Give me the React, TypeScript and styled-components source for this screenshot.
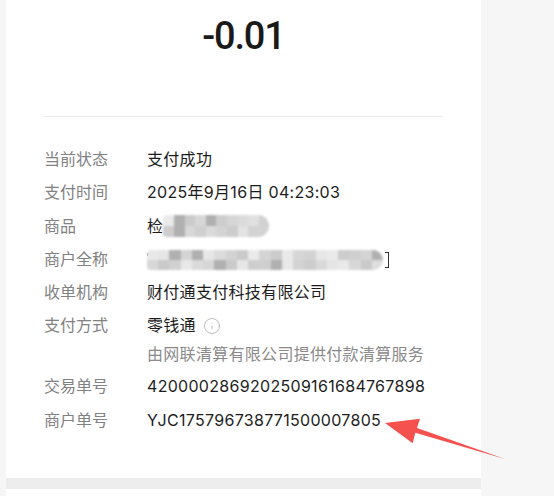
import React from 'react';
import { Info } from 'lucide-react';
import styled, { createGlobalStyle } from 'styled-components';

const GlobalStyle = createGlobalStyle`
  html, body {
    margin: 0;
    padding: 0;
    background: #f6f6f6;
  }
  body {
    font-family: Inter, "Noto Sans CJK SC", sans-serif;
    -webkit-font-smoothing: antialiased;
  }
`;

// pseudo random greys for the blurred (privacy) blocks
function shades(count: number, seed: number) {
  const out: string[] = [];
  let s = seed;
  for (let i = 0; i < count; i++) {
    s = (s * 9301 + 49297) % 233280;
    const r = s / 233280;
    const v = r > 0.9 ? 176 : Math.round(200 + r * 38);
    out.push(`rgb(${v},${v},${v})`);
  }
  return out;
}

interface MosaicProps {
  width: number;
  height: number;
  seed: number;
}

function Mosaic({ width, height, seed }: MosaicProps) {
  const cols = Math.round(width / 11);
  const tiles = shades(cols * 2, seed);
  return (
    <S.Mosaic $w={width} $h={height} $cols={cols}>
      {tiles.map((c, i) => (
        <S.Tile key={i} $c={c} />
      ))}
    </S.Mosaic>
  );
}

interface RowProps {
  label: string;
  children: React.ReactNode;
}

function Row({ label, children }: RowProps) {
  return (
    <S.Row>
      <S.Label>{label}</S.Label>
      <S.Value>{children}</S.Value>
    </S.Row>
  );
}

export default function App() {
  return (
    <>
      <GlobalStyle />
      <S.Page>
        <S.Column>
          <S.Card>
            <S.Amount>-0.01</S.Amount>
            <S.Divider />
            <S.List>
              <Row label="当前状态">支付成功</Row>
              <Row label="支付时间">2025年9月16日 04:23:03</Row>
              <Row label="商品">
                <S.Inline>
                  检<Mosaic width={106} height={22} seed={17} />
                </S.Inline>
              </Row>
              <Row label="商户全称">
                <S.Inline>
                  <S.Tick />
                  <Mosaic width={236} height={20} seed={91} />
                  <S.Bracket />
                </S.Inline>
              </Row>
              <Row label="收单机构">财付通支付科技有限公司</Row>
              <Row label="支付方式">
                <S.Inline>
                  零钱通
                  <S.InfoIcon>
                    <Info size={18} strokeWidth={1.1} color="#acacac" />
                  </S.InfoIcon>
                </S.Inline>
                <S.Sub>由网联清算有限公司提供付款清算服务</S.Sub>
              </Row>
              <Row label="交易单号">4200002869202509161684767898</Row>
              <Row label="商户单号">YJC175796738771500007805</Row>
            </S.List>
          </S.Card>
          <S.Band />
          <S.NextCard />
        </S.Column>
        <S.Arrow width="124" height="46" viewBox="0 0 124 46">
          <polygon points="2,7 37,2.7 34,12 122,43 32.3,16.7 29.7,27.3" fill="#f5514f" />
        </S.Arrow>
      </S.Page>
    </>
  );
}

const S = {
  Page: styled.div`
    position: relative;
    height: 496px;
    overflow: hidden;
    padding-left: 6px;
  `,
  Column: styled.div`
    width: 475px;
  `,
  Card: styled.div`
    background: #fff;
    padding: 11px 38px 41px;
  `,
  Amount: styled.div`
    text-align: center;
    font-family: Roboto, sans-serif;
    font-weight: 500;
    font-size: 38px;
    line-height: 51px;
    letter-spacing: -1.2px;
    color: #1a1a1a;
  `,
  Divider: styled.div`
    height: 1px;
    margin-top: 54px;
    background: #ebebeb;
  `,
  List: styled.div`
    margin-top: 26px;
  `,
  Row: styled.div`
    display: grid;
    grid-template-columns: 103px 1fr;
    font-size: 16px;
    line-height: 33.3px;
  `,
  Label: styled.div`
    color: #828282;
  `,
  Value: styled.div`
    color: #1c1c1c;
    letter-spacing: 0.3px;
  `,
  Inline: styled.div`
    display: flex;
    align-items: center;
    height: 33.3px;
  `,
  Sub: styled.div`
    color: #8a8a8a;
    line-height: 22.7px;
    padding-bottom: 5px;
  `,
  InfoIcon: styled.span`
    display: inline-flex;
    margin-left: 7px;
  `,
  Mosaic: styled.div<{ $w: number; $h: number; $cols: number }>`
    display: grid;
    grid-template-columns: repeat(${(p) => p.$cols}, 1fr);
    grid-template-rows: 1fr 1fr;
    width: ${(p) => p.$w}px;
    height: ${(p) => p.$h}px;
    border-radius: 4px ${(p) => p.$h / 2}px ${(p) => p.$h / 2}px 4px;
    overflow: hidden;
    filter: blur(0.8px);
  `,
  Tile: styled.div<{ $c: string }>`
    background: ${(p) => p.$c};
  `,
  Tick: styled.span`
    width: 1px;
    height: 3px;
    margin: -10px -1px 0 0;
    background: #666;
  `,
  Bracket: styled.span`
    width: 3px;
    height: 14px;
    margin-left: 2px;
    border: 1.5px solid #333;
    border-left: none;
  `,
  Band: styled.div`
    height: 11px;
    background: #ededed;
  `,
  NextCard: styled.div`
    height: 20px;
    background: #fff;
  `,
  Arrow: styled.svg`
    position: absolute;
    left: 383px;
    top: 416px;
  `,
};
